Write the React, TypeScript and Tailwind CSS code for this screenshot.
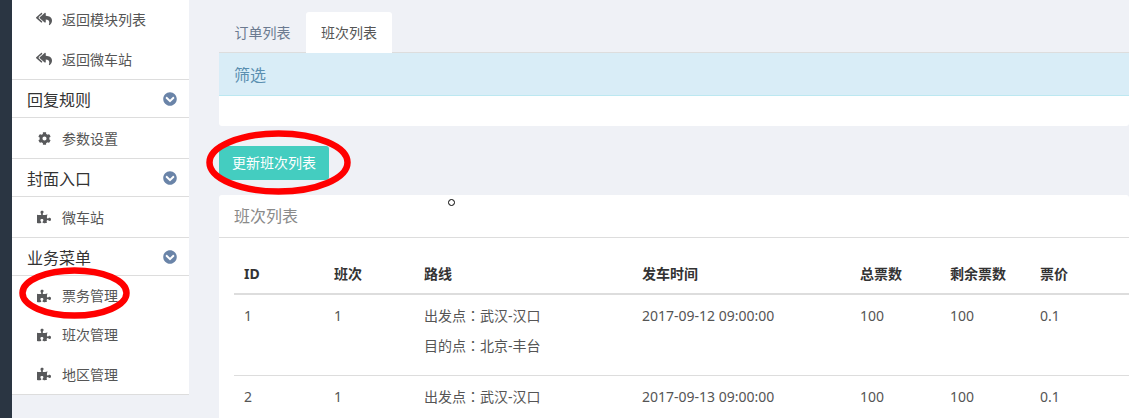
import type { ReactNode } from "react";
import { FaChevronCircleDown, FaCog, FaPuzzlePiece, FaReplyAll } from "react-icons/fa";

const font = "font-['Noto_Sans','Noto_Sans_CJK_SC',sans-serif]";

const MenuItem = ({ icon, label, tight }: { icon: ReactNode; label: string; tight?: boolean }) => (
  <div className={`flex items-center pl-[25px] text-[14px] text-[#555] ${tight ? "h-[39.33px]" : "h-[40px]"}`}>
    <span className="flex w-[14px] justify-center text-[#58595b]">{icon}</span>
    <span className="ml-[11px]">{label}</span>
  </div>
);

const MenuHeader = ({ label }: { label: string }) => (
  <div className="flex h-[39px] items-center justify-between border-y border-[#ddd] pr-[12px] pl-[15px] text-[16px] text-[#333]">
    <span className="pt-[2px]">{label}</span>
    <FaChevronCircleDown className="text-[14px] text-[#6a84a8]" />
  </div>
);

const Sidebar = () => (
  <aside className="-mt-px w-[177px] shrink-0">
    <div className="bg-white">
      <MenuItem icon={<FaReplyAll className="shrink-0 text-[16px]" />} label="返回模块列表" />
      <MenuItem icon={<FaReplyAll className="shrink-0 text-[16px]" />} label="返回微车站" />
      <MenuHeader label="回复规则" />
      <MenuItem icon={<FaCog className="shrink-0 text-[13px]" />} label="参数设置" />
      <MenuHeader label="封面入口" />
      <MenuItem icon={<FaPuzzlePiece className="shrink-0 text-[14px]" />} label="微车站" />
      <MenuHeader label="业务菜单" />
      <MenuItem tight icon={<FaPuzzlePiece className="shrink-0 text-[14px]" />} label="票务管理" />
      <MenuItem tight icon={<FaPuzzlePiece className="shrink-0 text-[14px]" />} label="班次管理" />
      <MenuItem tight icon={<FaPuzzlePiece className="shrink-0 text-[14px]" />} label="地区管理" />
    </div>
    <div className="h-px bg-[#ddd]" />
  </aside>
);

const rows = [
  { id: 1, shift: 1, from: "武汉-汉口", to: "北京-丰台", time: "2017-09-12 09:00:00", total: 100, left: 100, price: "0.1" },
  { id: 2, shift: 1, from: "武汉-汉口", to: "", time: "2017-09-13 09:00:00", total: 100, left: 100, price: "0.1" },
];

const heads = [
  { label: "ID", width: "w-[90px]" },
  { label: "班次", width: "w-[90px]" },
  { label: "路线", width: "w-[218px]" },
  { label: "发车时间", width: "w-[218px]" },
  { label: "总票数", width: "w-[90px]" },
  { label: "剩余票数", width: "w-[90px]" },
  { label: "票价", width: "w-[120px]" },
];

const Colon = () => <span className="font-['Noto_Sans_CJK_TC',sans-serif]">：</span>;

const ShiftTable = () => (
  <table className="w-[916px] table-fixed border-collapse text-[14px] text-[#555]">
    <colgroup>
      {heads.map((h) => (
        <col key={h.label} className={h.width} />
      ))}
    </colgroup>
    <thead>
      <tr className="h-[41px] border-b-2 border-[#ddd]">
        {heads.map((h) => (
          <th key={h.label} className="px-[10px] text-left align-middle font-bold text-[#333]">
            {h.label}
          </th>
        ))}
      </tr>
    </thead>
    <tbody>
      {rows.map((r) => (
        <tr key={r.id} className="border-b border-[#ddd] align-top">
          <td className="px-[10px] pt-[11px] leading-[20px]">{r.id}</td>
          <td className="px-[10px] pt-[11px] leading-[20px]">{r.shift}</td>
          <td className="px-[10px] pt-[10px] pb-[19px] leading-[20px]">
            <p>
              出发点
              <Colon />
              {r.from}
            </p>
            {r.to && (
              <p className="mt-[9px]">
                目的点
                <Colon />
                {r.to}
              </p>
            )}
          </td>
          <td className="px-[10px] pt-[11px] leading-[20px]">{r.time}</td>
          <td className="px-[10px] pt-[11px] leading-[20px]">{r.total}</td>
          <td className="px-[10px] pt-[11px] leading-[20px]">{r.left}</td>
          <td className="px-[10px] pt-[11px] leading-[20px]">{r.price}</td>
        </tr>
      ))}
    </tbody>
  </table>
);

const Main = () => (
  <main className="ml-[30px] w-[910px] shrink-0 pt-[12px]">
    <div className="flex h-[41px] border-b border-[#ddd] text-[14px]">
      <div className="flex h-[40px] w-[87px] items-center justify-center text-[#6b7a90]">订单列表</div>
      <div className="flex h-[41px] w-[86px] items-center justify-center rounded-t-[3px] bg-white text-[#555]">
        班次列表
      </div>
    </div>
    <section className="rounded-b-[3px] bg-white">
      <div className="flex h-[43px] items-center border-b border-[#bce8f1] bg-[#d9edf7] pt-[2px] pl-[15px] text-[16px] text-[#5b8fb0]">
        筛选
      </div>
      <div className="h-[30px]" />
    </section>
    <button className="mt-[20px] flex h-[34px] w-[110px] items-center justify-center rounded-[3px] bg-[#44cdc0] pb-[2px] text-[14px] text-white">
      更新班次列表
    </button>
    <section className="mt-[15px] rounded-t-[3px] bg-white">
      <div className="flex h-[43px] items-center border-b border-[#ddd] pl-[15px] text-[16px] text-[#8a8a8a]">
        班次列表
      </div>
      <div className="px-[15px] pt-[15px]">
        <ShiftTable />
      </div>
    </section>
  </main>
);

export default function App() {
  return (
    <div className={`relative flex h-[418px] w-[1129px] overflow-hidden bg-[#eff1f6] ${font}`}>
      <div className="w-[12px] shrink-0 bg-[#2a3542]" />
      <Sidebar />
      <Main />
      <svg className="pointer-events-none absolute top-[267px] left-[19px] h-[52px] w-[111px]" viewBox="0 0 111 52">
        <ellipse cx="55.5" cy="26" rx="52" ry="22.5" fill="none" stroke="#ff0000" strokeWidth="6.5" />
      </svg>
      <svg className="pointer-events-none absolute top-[130px] left-[206px] h-[65px] w-[145px]" viewBox="0 0 145 65">
        <ellipse cx="72.5" cy="32.5" rx="69" ry="29" fill="none" stroke="#ff0000" strokeWidth="6.5" />
      </svg>
      <span className="absolute top-[199px] left-[448px] h-[7px] w-[7px] rounded-full border border-black bg-white" />
    </div>
  );
}
